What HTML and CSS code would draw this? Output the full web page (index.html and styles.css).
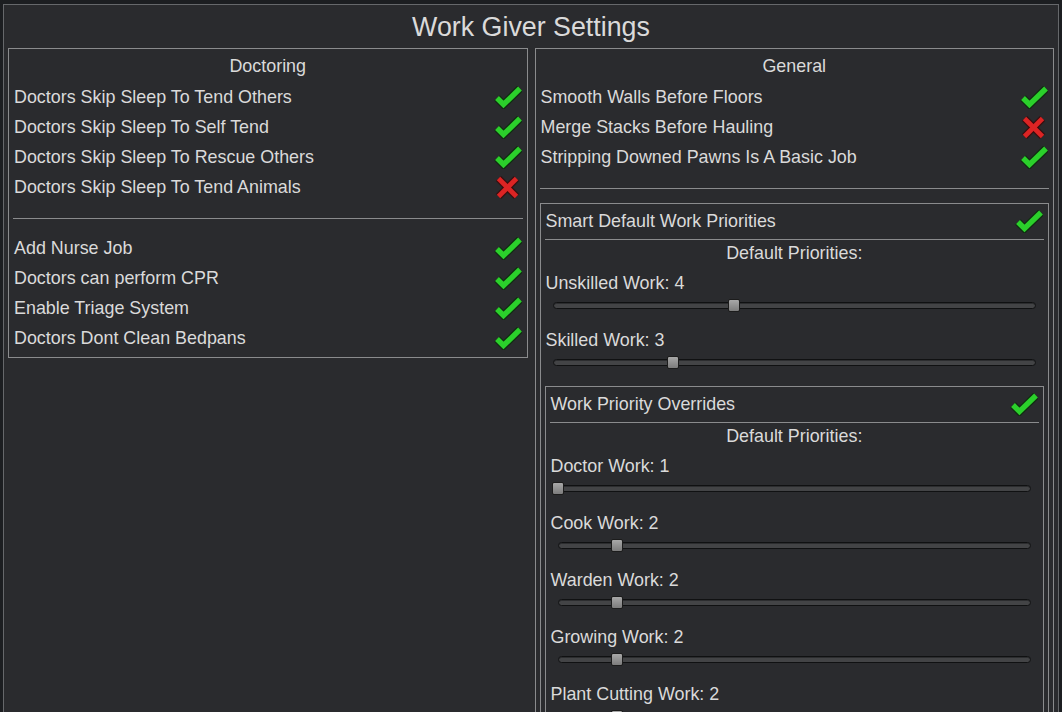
FILE: index.html
```html
<!DOCTYPE html>
<html lang="en">
<head>
    <meta charset="UTF-8">
    <meta name="viewport" content="width=device-width, initial-scale=1.0">
    <title>Work Giver Settings</title>
    <link rel="stylesheet" href="styles.css">
</head>
<body>
    <!-- Shared icons -->
    <svg class="defs" width="0" height="0">
        <symbol id="icon-check" viewBox="0 0 28 23">
            <polyline points="3,12 9.5,18.5 26,2.5" fill="none" stroke="#0a2e0a" stroke-width="8" stroke-opacity="0.8"/>
            <polyline points="3,12 9.5,18.5 26,2.5" fill="none" stroke="#2bd02b" stroke-width="5.4"/>
        </symbol>
        <symbol id="icon-cross" viewBox="0 0 25 25">
            <g stroke="#3a0808" stroke-width="7.4" stroke-opacity="0.8">
                <line x1="3.5" y1="3.5" x2="21.5" y2="21.5"/>
                <line x1="21.5" y1="3.5" x2="3.5" y2="21.5"/>
            </g>
            <g stroke="#dc2424" stroke-width="4.8">
                <line x1="3.5" y1="3.5" x2="21.5" y2="21.5"/>
                <line x1="21.5" y1="3.5" x2="3.5" y2="21.5"/>
            </g>
        </symbol>
    </svg>

    <div class="window">
        <h1 class="title">Work Giver Settings</h1>

        <div class="columns">
            <!-- Doctoring -->
            <section class="panel">
                <h2 class="panel-title">Doctoring</h2>
                <div class="toggle"><span>Doctors Skip Sleep To Tend Others</span><svg class="check"><use href="#icon-check"/></svg></div>
                <div class="toggle"><span>Doctors Skip Sleep To Self Tend</span><svg class="check"><use href="#icon-check"/></svg></div>
                <div class="toggle"><span>Doctors Skip Sleep To Rescue Others</span><svg class="check"><use href="#icon-check"/></svg></div>
                <div class="toggle"><span>Doctors Skip Sleep To Tend Animals</span><svg class="cross"><use href="#icon-cross"/></svg></div>
                <div class="divider"></div>
                <div class="toggle"><span>Add Nurse Job</span><svg class="check"><use href="#icon-check"/></svg></div>
                <div class="toggle"><span>Doctors can perform CPR</span><svg class="check"><use href="#icon-check"/></svg></div>
                <div class="toggle"><span>Enable Triage System</span><svg class="check"><use href="#icon-check"/></svg></div>
                <div class="toggle"><span>Doctors Dont Clean Bedpans</span><svg class="check"><use href="#icon-check"/></svg></div>
            </section>

            <!-- General -->
            <section class="panel">
                <h2 class="panel-title">General</h2>
                <div class="toggle"><span>Smooth Walls Before Floors</span><svg class="check"><use href="#icon-check"/></svg></div>
                <div class="toggle"><span>Merge Stacks Before Hauling</span><svg class="cross"><use href="#icon-cross"/></svg></div>
                <div class="toggle"><span>Stripping Downed Pawns Is A Basic Job</span><svg class="check"><use href="#icon-check"/></svg></div>
                <div class="divider"></div>

                <div class="box">
                    <div class="box-head"><span>Smart Default Work Priorities</span><svg class="check"><use href="#icon-check"/></svg></div>
                    <div class="box-sub">Default Priorities:</div>
                    <div class="slider-item">
                        <div class="slider-label">Unskilled Work: 4</div>
                        <div class="slider"><div class="track"></div><div class="handle" style="left: 37.5%"></div></div>
                    </div>
                    <div class="slider-item">
                        <div class="slider-label">Skilled Work: 3</div>
                        <div class="slider"><div class="track"></div><div class="handle" style="left: 25%"></div></div>
                    </div>

                    <div class="box box-nested">
                        <div class="box-head"><span>Work Priority Overrides</span><svg class="check"><use href="#icon-check"/></svg></div>
                        <div class="box-sub">Default Priorities:</div>
                        <div class="slider-item">
                            <div class="slider-label">Doctor Work: 1</div>
                            <div class="slider"><div class="track"></div><div class="handle" style="left: 0%"></div></div>
                        </div>
                        <div class="slider-item">
                            <div class="slider-label">Cook Work: 2</div>
                            <div class="slider"><div class="track"></div><div class="handle" style="left: 12.5%"></div></div>
                        </div>
                        <div class="slider-item">
                            <div class="slider-label">Warden Work: 2</div>
                            <div class="slider"><div class="track"></div><div class="handle" style="left: 12.5%"></div></div>
                        </div>
                        <div class="slider-item">
                            <div class="slider-label">Growing Work: 2</div>
                            <div class="slider"><div class="track"></div><div class="handle" style="left: 12.5%"></div></div>
                        </div>
                        <div class="slider-item">
                            <div class="slider-label">Plant Cutting Work: 2</div>
                            <div class="slider"><div class="track"></div><div class="handle" style="left: 12.5%"></div></div>
                        </div>
                    </div>
                </div>
            </section>
        </div>
    </div>
</body>
</html>
```

FILE: styles.css
```css
/* Window colours */
:root {
    --page-bg: #1c1e21;
    --window-bg: #2a2b2e;
    --window-line: #66686b;
    --line: #8a8b8d;
    --text: #dadada;
    --font: "Liberation Sans", Arial, sans-serif;
}

* {
    margin: 0;
    padding: 0;
    box-sizing: border-box;
}

body {
    background-color: var(--page-bg);
    color: var(--text);
    font-family: var(--font);
    font-size: 17.9px;
    height: 100vh;
    overflow: hidden;
    padding: 4px 3px 0 3px;
}

.defs {
    position: absolute;
}

.window {
    background-color: var(--window-bg);
    border: 1px solid var(--window-line);
    height: 900px;
    padding: 0 4px;
}

.title {
    height: 43px;
    padding-top: 2px;
    line-height: 41px;
    text-align: center;
    font-size: 26.8px;
    font-weight: normal;
}

.columns {
    display: grid;
    grid-template-columns: 1fr 1fr;
    gap: 7px;
    align-items: start;
}

.panel {
    border: 1px solid var(--line);
    padding: 0 4px 4px;
}

.panel-title {
    height: 33px;
    line-height: 34px;
    text-align: center;
    font-size: 17.9px;
    font-weight: normal;
}

.toggle {
    display: flex;
    justify-content: space-between;
    align-items: center;
    height: 30px;
    padding-left: 1px;
    white-space: nowrap;
}

.check {
    width: 28px;
    height: 23px;
    margin-right: 1px;
    flex-shrink: 0;
}

.cross {
    width: 25px;
    height: 25px;
    margin-right: 3px;
    flex-shrink: 0;
}

.divider {
    height: 1px;
    background-color: var(--line);
    margin: 16px 0 14px;
}

/* Nested setting boxes */
.box {
    border: 1px solid var(--line);
    padding: 0 4px;
}

.box-nested {
    margin-top: 6px;
}

.box-head {
    display: flex;
    justify-content: space-between;
    align-items: center;
    height: 36px;
    border-bottom: 1px solid var(--line);
    padding-left: 1px;
}

.box-sub {
    line-height: 26px;
    text-align: center;
}

.slider-item {
    padding-top: 4px;
}

.slider-label {
    line-height: 26px;
    padding-left: 1px;
}

.slider {
    position: relative;
    height: 27px;
    margin: 0 8px;
    padding-top: 6px;
}

.track {
    height: 7px;
    border-radius: 4px;
    background-color: #434446;
    border: 1px solid #101112;
    box-shadow: inset 0 1px 0 #2c2d2f;
}

.handle {
    position: absolute;
    top: 3px;
    width: 12px;
    height: 13px;
    transform: translateX(-50%);
    border: 1px solid #1c1c1c;
    border-radius: 2px;
    background: linear-gradient(#a8a8a8, #7c7c7c);
}
```
